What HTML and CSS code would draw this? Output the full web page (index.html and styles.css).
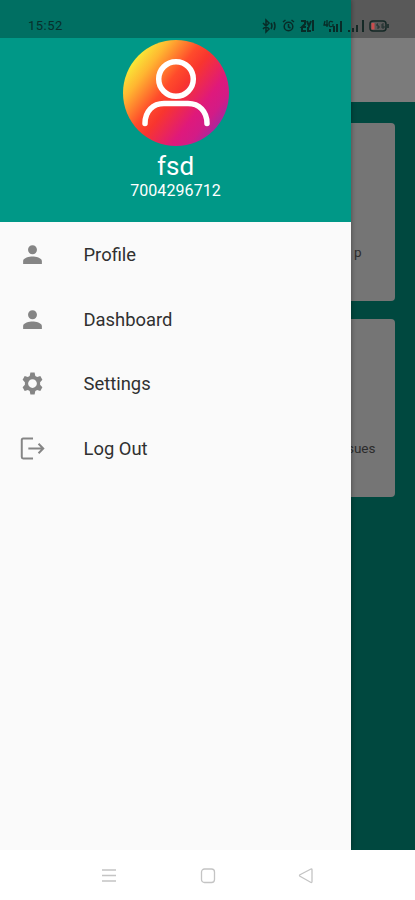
FILE: index.html
```html
<!DOCTYPE html>
<html lang="en">
<head>
<meta charset="utf-8">
<title>Menu</title>
<link rel="stylesheet" href="styles.css">
</head>
<body>
<div class="phone">
  <header class="status">
    <span class="clock">15:52</span>
    <svg class="status-icons" width="130" height="16" viewBox="0 0 130 16" fill="none" stroke="#0a211e" stroke-width="1.500">
      <path d="M2 5l6 6-3 3V2l3 3-6 6M10 5q2 3 0 6M13 4q2 4 0 8"/>
      <circle cx="27.500" cy="8.500" r="4.300"/><path d="M27.500 6v3l2 1M22 4l2.500-2M33 4l-2.500-2"/>
      <path d="M40 3h4v3l-3 3h4M46 3l2 5 2-5M41 10v3h4M47 9v4h3M52 2v11" stroke-width="2"/>
      <path d="M64 3l-1 4h4M66 2v7M72 4q-4-2-4 2t4 2V6" stroke-width="1.300"/>
      <path d="M69 11v3M73 8v6M76 6v8M80 3v11M88 12v2M92 10v4M96 7v7M102 2v12" stroke-width="2"/>
      <rect x="109" y="3" width="16" height="10" rx="3"/><path d="M127 6v4"/>
      <path d="M112 5v6.500" stroke="#e04c4c" stroke-width="3"/><path d="M117 6h-1v2h2v2h-2M123 6h-2v4h2V8h-2" stroke-width=".8"/>
    </svg>
  </header>
  <main class="screen">
    <aside class="drawer">
      <section class="account">
        <div class="avatar">
          <svg width="106" height="106" viewBox="0 0 106 106" fill="none" stroke="#fff" stroke-width="5.500" stroke-linecap="round">
            <circle cx="53" cy="39" r="17.300"/>
            <path d="M22 83.500C22 71 30 63.500 41 63.500H65C76 63.500 84 71 84 83.500"/>
          </svg>
        </div>
        <div class="name">fsd</div>
        <div class="number">7004296712</div>
      </section>
      <nav class="menu">
        <a class="item"><svg class="icon" viewBox="0 0 24 24"><path d="M12 11.800c2.400 0 4.300-1.900 4.300-4.300S14.400 3.200 12 3.200 7.700 5.100 7.700 7.500s1.900 4.300 4.300 4.300zm0 2.200c-3 0-9 1.400-9 4.200V21h18v-2.800C21 15.400 15 14 12 14z"/></svg><span>Profile</span></a>
        <a class="item"><svg class="icon" viewBox="0 0 24 24"><path d="M12 11.800c2.400 0 4.300-1.900 4.300-4.300S14.400 3.200 12 3.200 7.700 5.100 7.700 7.500s1.900 4.300 4.300 4.300zm0 2.200c-3 0-9 1.400-9 4.200V21h18v-2.800C21 15.400 15 14 12 14z"/></svg><span>Dashboard</span></a>
        <a class="item"><svg class="icon" viewBox="0 0 24 24"><path fill-rule="evenodd" d="M10 1.500h4l.7 3.200 1.800 1 3-1 2 3.600-2.200 2.400v2.600l2.200 2.400-2 3.600-3-1-1.800 1-.7 3.200h-4l-.7-3.200-1.800-1-3 1-2-3.600 2.200-2.400v-2.600L2.500 8.300l2-3.600 3 1 1.800-1zM12 7.800a4.200 4.200 0 1 0 0 8.400a4.200 4.200 0 1 0 0-8.400z"/></svg><span>Settings</span></a>
        <a class="item"><svg class="icon line" viewBox="0 0 24 24"><path d="M12.500 2.500H3Q1.700 2.500 1.700 3.800v16.400Q1.700 21.500 3 21.500h9.500M8 12h14M17.800 7.500l4.500 4.500-4.500 4.500"/></svg><span>Log Out</span></a>
      </nav>
    </aside>
    <section class="backdrop">
      <div class="toolbar"></div>
      <div class="card"><span class="shop">p</span></div>
      <div class="card"><span class="issues">sues</span></div>
    </section>
  </main>
  <footer class="navbar">
    <svg viewBox="0 0 18 18"><path d="M2 3h14M2 8.500h14M2 14h14"/></svg>
    <svg viewBox="0 0 18 18"><rect x="2.500" y="2" width="13" height="13.500" rx="3"/></svg>
    <svg viewBox="0 0 18 18"><path d="M14 2L3 7.700q-1 .8 0 1.600L14 15.500q1 .3 1-1V3q0-1.400-1-1z"/></svg>
  </footer>
</div>
</body>
</html>
```
FILE: styles.css
```css
* { box-sizing: border-box; }
body { margin: 0; font-family: Roboto, sans-serif; background: #fff; }
.phone { position: relative; width: 415px; height: 900px; display: flex; flex-direction: column; overflow: hidden; }
.status {
  position: absolute; top: 0; left: 0; z-index: 2;
  width: 100%; height: 38px; padding: 14px 24px 0 28px;
  display: flex; align-items: flex-start; justify-content: space-between;
  background: rgba(0, 0, 0, .27);
}
.clock { font-size: 13px; letter-spacing: .5px; line-height: 25px; margin-top: -1px; color: #07302c; }
.status-icons { margin-top: 4px; opacity: .85; }
.screen { display: flex; height: 850px; overflow: hidden; }
.drawer { width: 351px; background: #fafafa; box-shadow: 0 0 5px rgba(0, 0, 0, .4); z-index: 1; }
.account { height: 222px; padding-top: 39.500px; display: flex; flex-direction: column; align-items: center; background: #009887; color: #fff; }
.avatar { width: 106px; height: 106px; border-radius: 50%; overflow: hidden; background: linear-gradient(128deg, #f8ee38 13%, #ffb631 25%, #ff4b2b 42%, #f8352f 51%, #df197b 69%, #d31b86 78%, #8432b4 94%); }
.avatar svg { display: block; }
.name { margin-top: 4px; font-size: 26px; line-height: 32px; }
.number { font-size: 16px; line-height: 18px; letter-spacing: .08px; }
.menu { display: flex; flex-direction: column; }
.item { height: 64.700px; padding-left: 20px; display: flex; align-items: center; gap: 38.500px; font-size: 18.400px; line-height: 22px; color: #303030; }
.item span { padding-top: 1px; }
.icon { width: 25px; height: 25px; fill: #858585; }
.icon.line { fill: none; stroke: #858585; stroke-width: 1.900; }
.backdrop { width: 64px; display: flex; flex-direction: column; overflow: hidden; background: #00483f; }
.toolbar { height: 102px; flex-shrink: 0; background: #7b7b7b; margin-bottom: 21px; }
.card { width: 43.500px; height: 177.500px; flex-shrink: 0; margin-bottom: 18.500px; padding-top: 120px; border-radius: 0 4px 4px 0; display: flex; justify-content: flex-end; background: #757575; color: #2c2c2c; font-size: 13.500px; line-height: 18px; }
.shop { padding-right: 33px; }
.issues { padding-right: 19px; }
.navbar { height: 50px; padding: 1px 100px 0; display: flex; align-items: center; justify-content: space-between; background: #fff; }
.navbar svg { width: 18px; height: 18px; fill: none; stroke: #c4c4c4; stroke-width: 1.300; }
```
